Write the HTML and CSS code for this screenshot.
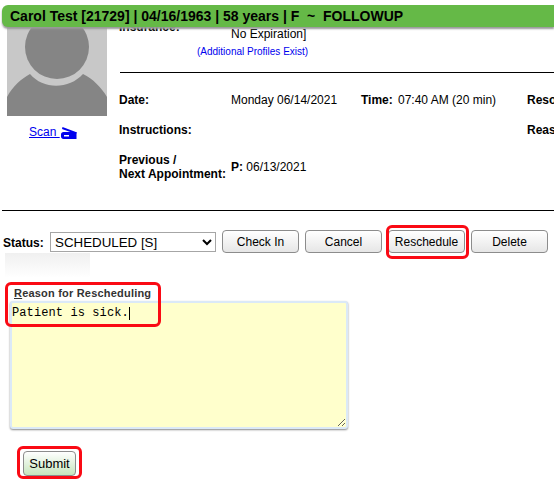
FILE: index.html
```html
<!DOCTYPE html>
<html lang="en">
<head>
    <meta charset="UTF-8">
    <title>Appointment</title>
    <link rel="stylesheet" href="styles.css">
</head>
<body>
    <div class="title-bar">Carol Test [21729] | 04/16/1963 | 58 years | F &nbsp;~&nbsp; FOLLOWUP</div>

    <div class="summary">
        <div class="photo-col">
            <svg class="photo" width="100" height="89" viewBox="0 0 100 89">
                <rect width="100" height="89" fill="#c8c8c8"/>
                <circle cx="50" cy="20" r="32" fill="#858585"/>
                <path d="M0 89V70C6 59 14 52 23 47C36 62.6 62 62.6 76 47C86 52 94 60 100 70V89Z" fill="#858585"/>
            </svg>
            <a class="scan-link" href="#">Scan
                <svg class="scan-icon" width="16" height="12" viewBox="0 0 16 12">
                    <path d="M1.5 0L15.5 5.2V6.5H13.5L1 2Z" fill="#0000ee"/>
                    <path d="M2.5 5H15.5V12H2.5C1 12 0 11 0 9.5V7.5C0 6 1 5 2.5 5ZM3 8V9.5H8V8Z" fill="#0000ee" fill-rule="evenodd"/>
                </svg>
            </a>
        </div>

        <div class="details">
            <div class="insurance">
                <div class="insurance-label">Insurance:</div>
                <div class="insurance-value">
                    <div>No Expiration]</div>
                    <div class="profiles-note">(Additional Profiles Exist)</div>
                </div>
            </div>
            <hr class="rule">
            <div class="appt-grid">
                <span class="label">Date:</span>
                <span>Monday 06/14/2021</span>
                <span class="label">Time:</span>
                <span>07:40 AM (20 min)</span>
                <span class="label">Resource:</span>

                <span class="label">Instructions:</span>
                <span></span>
                <span></span>
                <span></span>
                <span class="label">Reason:</span>

                <span class="label prev-label">Previous /<br>Next Appointment:</span>
                <span class="prev-next"><b>P:</b> 06/13/2021</span>
            </div>
        </div>
    </div>

    <hr class="rule-full">

    <div class="status-row">
        <label class="status-label" for="status">Status:</label>
        <select class="status-select" id="status">
            <option>SCHEDULED [S]</option>
        </select>
        <button class="btn">Check In</button>
        <button class="btn">Cancel</button>
        <button class="btn btn-marked">Reschedule</button>
        <button class="btn">Delete</button>
    </div>

    <div class="smudge"></div>

    <div class="reason">
        <div class="reason-mark"></div>
        <div class="caret"></div>
        <label class="reason-label" for="reason"><u>R</u>eason for Rescheduling</label>
        <textarea class="reason-text" id="reason">Patient is sick.</textarea>
    </div>

    <div class="submit-mark">
        <button class="submit-btn">Submit</button>
    </div>
</body>
</html>
```

FILE: styles.css
```css
html, body {
    height: 486px;
    overflow: hidden;
}
body {
    margin: 0;
    padding-top: 5px;
    font-family: "Liberation Sans", Arial, sans-serif;
    font-size: 12px;
    color: #000000;
    background-color: #ffffff;
}
.title-bar {
    position: relative;
    z-index: 2;
    box-sizing: border-box;
    height: 22px;
    margin-left: 2px;
    padding-left: 8px;
    line-height: 22px;
    font-size: 14px;
    font-weight: bold;
    white-space: nowrap;
    background-color: #65b947;
    border-radius: 6px 0 0 6px;
    box-shadow: 0 2px 2px #999999;
}
.summary {
    display: flex;
    height: 183px;
    padding-left: 7px;
}
.photo-col {
    width: 100px;
}
.photo {
    display: block;
}
.scan-link {
    display: block;
    margin: 9px 0 0 22px;
    color: #0000ee;
}
.scan-icon {
    margin-left: 1px;
    vertical-align: -3px;
}
.details {
    flex: 1;
    margin-left: 12px;
    min-width: 0;
}
.insurance {
    display: flex;
    height: 45px;
    margin-top: -7px;
}
.insurance-label {
    width: 112px;
    font-weight: bold;
}
.insurance-value {
    padding-top: 7px;
}
.profiles-note {
    margin: 5px 0 0 -34px;
    font-size: 10px;
    color: #0000ee;
}
.rule {
    height: 1px;
    margin: 7px 0 0 1px;
    border: none;
    background-color: #000000;
}
.appt-grid {
    display: grid;
    grid-template-columns: 112px 130px 37px 129px 100px;
    grid-template-rows: 30px 29px 29px;
    margin-top: 20px;
    white-space: nowrap;
}
.label {
    font-weight: bold;
}
.prev-label {
    padding-top: 1px;
}
.prev-next {
    align-self: center;
}
.rule-full {
    height: 1px;
    margin: 0 0 0 2px;
    border: none;
    background-color: #000000;
}
.status-row {
    display: flex;
    align-items: center;
    height: 23px;
    margin: 19px 0 0 3px;
}
.status-label {
    width: 47px;
    padding-top: 2px;
    font-weight: bold;
}
.status-select {
    box-sizing: border-box;
    width: 166px;
    height: 20px;
    margin: 1px 6px 0 0;
    padding: 0;
    font-family: "Liberation Sans", Arial, sans-serif;
    font-size: 13.33px;
    background-color: #ffffff;
    border: 1px solid #a6a6a6;
    border-radius: 0;
}
.btn {
    box-sizing: border-box;
    width: 77px;
    height: 23px;
    margin-right: 6px;
    padding: 0;
    font-family: "Liberation Sans", Arial, sans-serif;
    font-size: 12px;
    color: #000000;
    background: linear-gradient(#ffffff, #e6e6e6);
    border: 1px solid #8c8c8c;
    border-radius: 4px;
}
.btn-marked {
    position: relative;
}
.btn-marked::after {
    content: "";
    position: absolute;
    top: -6px;
    right: -5px;
    bottom: -7px;
    left: -3px;
    border: 3px solid #fa0a14;
    border-radius: 6px;
}
.smudge {
    width: 85px;
    height: 25px;
    margin-left: 5px;
    background: linear-gradient(#f0f0f0, #ffffff);
}
.reason {
    position: relative;
    width: 338px;
    margin: 9px 0 0 10px;
}
.reason-mark {
    position: absolute;
    z-index: 1;
    top: -5px;
    left: -5px;
    width: 150px;
    height: 39px;
    border: 3px solid #fa0a14;
    border-radius: 6px;
    pointer-events: none;
}
.caret {
    position: absolute;
    z-index: 1;
    top: 20px;
    left: 119px;
    width: 1px;
    height: 13px;
    background-color: #000000;
}
.reason-label {
    display: block;
    height: 14px;
    margin-left: 4px;
    font-size: 11px;
    font-weight: bold;
    letter-spacing: 0.2px;
    color: #333333;
}
.reason-text {
    display: block;
    box-sizing: border-box;
    width: 338px;
    height: 128px;
    margin: 0;
    padding: 3px 0;
    font-family: "Liberation Mono", "Courier New", monospace;
    font-size: 12px;
    letter-spacing: 0.1px;
    color: #000000;
    background-color: #ffffcc;
    border: 2px solid #dbe9f7;
    border-radius: 3px;
    box-shadow: 0 1px 2px #888888;
}
.submit-mark {
    box-sizing: border-box;
    width: 65px;
    height: 33px;
    margin: 17px 0 0 17px;
    padding: 2px 3px 0;
    border: 3px solid #fa0a14;
    border-radius: 6px;
}
.submit-btn {
    display: block;
    box-sizing: border-box;
    width: 53px;
    height: 25px;
    padding: 0;
    font-family: "Liberation Sans", Arial, sans-serif;
    font-size: 13px;
    color: #000000;
    background: linear-gradient(#ffffff, #c6e6bd);
    border: 1px solid #8c8c8c;
    border-radius: 4px;
}
```
